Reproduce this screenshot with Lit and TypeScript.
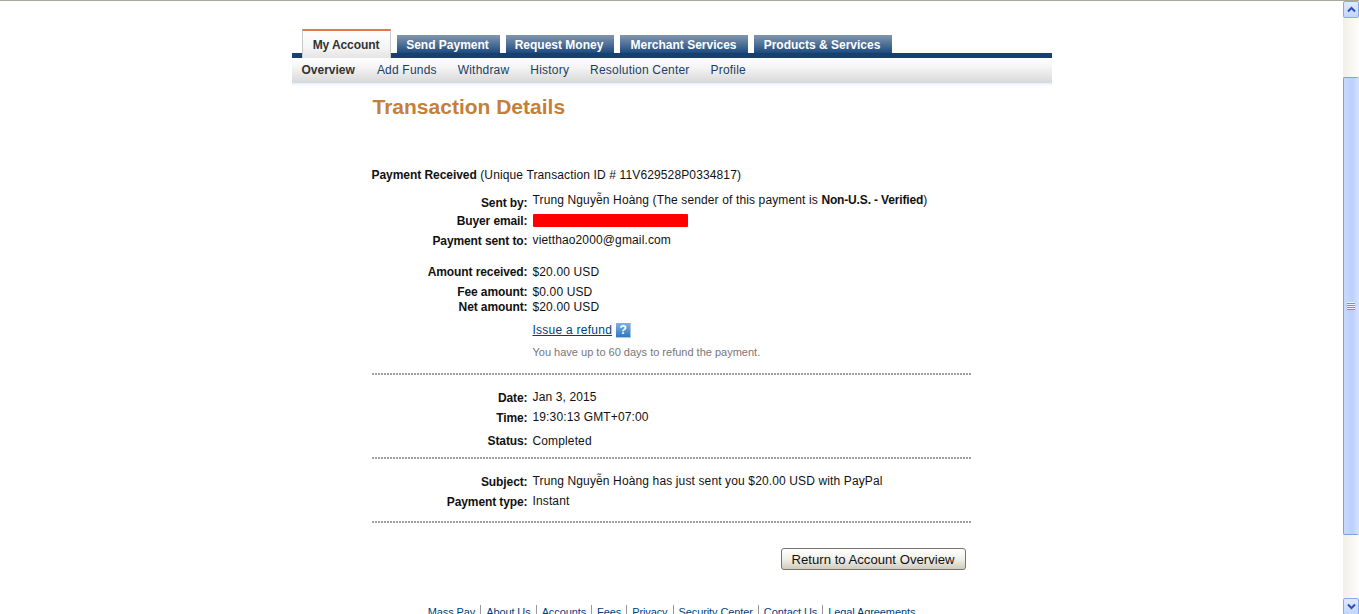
import { LitElement, html, css } from "lit";
import { customElement } from "lit/decorators.js";

const TABS = ["Send Payment", "Request Money", "Merchant Services", "Products & Services"];
const SUB = ["Add Funds", "Withdraw", "History", "Resolution Center", "Profile"];
const FOOT = ["Mass Pay", "About Us", "Accounts", "Fees", "Privacy", "Security Center", "Contact Us", "Legal Agreements"];

@customElement("app-root")
export class AppRoot extends LitElement {
  static styles = css`
    :host { display: block; font-family: "Liberation Sans", Arial, sans-serif; font-size: 12px; color: #111; }
    * { box-sizing: border-box; }
    .page { height: 614px; overflow: hidden; display: flex; border-top: 1px solid #aca899; background: #fff; }
    .main { flex: 1; min-width: 0; overflow: hidden; }
    .wrap { width: 760px; margin: 0 auto; }

    .tabs { display: flex; align-items: flex-end; gap: 6px; height: 52px; padding: 28px 0 0 10px; }
    .tab { height: 18px; text-align: center; line-height: 21px; font-weight: bold; color: #fff;
      background: linear-gradient(#8296ad, #5f7d9f 35%, #1d4a7e); white-space: nowrap; }
    .tab:nth-child(2) { width: 103px; padding-right: 1px; }
    .tab:nth-child(3) { width: 108px; padding-right: 1px; }
    .tab:nth-child(4) { width: 128px; }
    .tab:nth-child(5) { width: 138px; padding-right: 1px; }
    .tab.active { height: 29px; margin-bottom: -5px; position: relative; z-index: 1; width: 89px; letter-spacing: -0.1px;
      background: linear-gradient(#fff, #f5f5f5 60%, #e4e4e4); color: #333; border: 1px solid #c9c9c9; border-bottom: 0;
      border-top: 2px solid #e2764a; line-height: 29px; }
    .bar { height: 5px; background: #173f70; }
    .sub { height: 25px; display: flex; align-items: center; padding: 0 0 0 10px; gap: 21px; color: #1c3d64;
      letter-spacing: 0.2px; background: linear-gradient(#fff, #f4f4f4 40%, #d9d9d9); border-bottom: 1px solid #cfdbe9; }
    .sub b { color: #333; letter-spacing: 0; margin-right: 1px; }
    .shade { height: 3px; background: linear-gradient(#e6edf6, #fff); }

    .content { width: 600px; margin-left: 80px; }
    h1 { margin: 0; padding: 7px 0 0 1px; height: 79px; font-size: 21px; line-height: 28px; font-weight: bold; color: #c47f3a; }
    .head { height: 20px; line-height: 20px; letter-spacing: 0.13px; }
    .head b { letter-spacing: -0.05px; }
    .row { display: grid; grid-template-columns: 156px 1fr; column-gap: 5px; height: 20px; line-height: 20px; }
    .lab { text-align: right; font-weight: bold; letter-spacing: -0.1px; }
    .val { letter-spacing: 0.13px; }
    .val b { letter-spacing: -0.15px; }
    .up .val { margin-top: -1px; }
    .redact { display: block; width: 155px; height: 13px; margin-top: 3px; background: #f00; border-radius: 1px; }
    .first { margin-top: 6px; }
    .first .lab { padding-top: 2px; }
    .first .val { margin-top: -1px; }
    .gap { margin-top: 11px; }
    .fee { height: 17px; }
    .net { height: 16px; line-height: 16px; }
    .date { margin-top: 13px; }
    .status { margin-top: 3px; }
    .refund { margin: 6px 0 0 161px; height: 18px; display: flex; align-items: center; gap: 4px; letter-spacing: 0.25px; }
    .refund a { color: #003f7d; text-decoration: underline; }
    .q { width: 15px; height: 15px; background: linear-gradient(#7fb4e4, #2f78c0); color: #fff; font-weight: bold; font-size: 12px;
      line-height: 15px; text-align: center; letter-spacing: 0; border-right: 1px solid #a9c6e2; border-bottom: 1px solid #a9c6e2; }
    .note { margin: 5px 0 0 161px; height: 16px; line-height: 16px; font-size: 11px; color: #777; }
    .dots { height: 2px; margin-top: 13px; background: repeating-linear-gradient(90deg, #a0a0a0 0 2px, transparent 2px 3px); }
    .dots.d2 { margin-top: 6px; }
    .dots.d3 { margin-top: 9px; }
    .actions { display: flex; justify-content: flex-end; padding: 25px 6px 0 0; }
    button { width: 185px; height: 22px; padding: 0; font: 13.15px "Liberation Sans", Arial, sans-serif; color: #111; border: 1px solid #76736a; border-radius: 3px;
      background: linear-gradient(#fff, #f1efe9 50%, #cfcbbe); }
    .foot { display: flex; justify-content: center; margin-top: 35px; font-size: 11px; line-height: 14px; color: #003f7d; }
    .foot span { padding: 0 5px; border-left: 1px solid #999; letter-spacing: -0.1px; }
    .foot span:first-child { border-left: 0; }

    .sb { width: 16px; flex: none; display: flex; flex-direction: column; background: linear-gradient(90deg, #f1efe8, #fdfdfa); }
    .arrow { height: 17px; flex: none; display: flex; align-items: center; justify-content: center;
      border: 1px solid #8aa8ec; border-radius: 2px; background: linear-gradient(#e1eafe, #c3d5fd); }
    .thumb { height: 458px; margin: 59px 0 63px; flex: none; display: flex; align-items: center; justify-content: center;
      border: 1px solid #7c9fe6; border-right-color: #d3e0fd; border-radius: 2px; background: linear-gradient(90deg, #c9d8fc, #bcd0fb 60%, #d3e0fd); }
    .grip { width: 8px; height: 8px; background: repeating-linear-gradient(#eef3fe 0 1px, #6f8fd6 1px 2px); }
    svg { display: block; }
  `;

  render() {
    return html`
      <div class="page">
        <div class="main">
          <div class="wrap">
            <nav class="tabs">
              <div class="tab active">My Account</div>
              ${TABS.map((t) => html`<div class="tab">${t}</div>`)}
            </nav>
            <div class="bar"></div>
            <div class="sub"><b>Overview</b>${SUB.map((s) => html`<span>${s}</span>`)}</div>
            <div class="shade"></div>
            <div class="content">
              <h1>Transaction Details</h1>
              <div class="head"><b>Payment Received</b> (Unique Transaction ID # 11V629528P0334817)</div>
              <div class="row first"><div class="lab">Sent by:</div><div class="val">Trung Nguyễn Hoàng (The sender of this payment is <b>Non-U.S. - Verified</b>)</div></div>
              <div class="row"><div class="lab">Buyer email:</div><div><span class="redact"></span></div></div>
              <div class="row up"><div class="lab">Payment sent to:</div><div class="val">vietthao2000@gmail.com</div></div>
              <div class="row gap"><div class="lab">Amount received:</div><div class="val">$20.00 USD</div></div>
              <div class="row fee"><div class="lab">Fee amount:</div><div class="val">$0.00 USD</div></div>
              <div class="row net"><div class="lab">Net amount:</div><div class="val">$20.00 USD</div></div>
              <div class="refund"><a>Issue a refund</a><span class="q">?</span></div>
              <div class="note">You have up to 60 days to refund the payment.</div>
              <div class="dots"></div>
              <div class="row date up"><div class="lab">Date:</div><div class="val">Jan 3, 2015</div></div>
              <div class="row up"><div class="lab">Time:</div><div class="val">19:30:13 GMT+07:00</div></div>
              <div class="row status"><div class="lab">Status:</div><div class="val">Completed</div></div>
              <div class="dots d2"></div>
              <div class="row date up"><div class="lab">Subject:</div><div class="val">Trung Nguyễn Hoàng has just sent you $20.00 USD with PayPal</div></div>
              <div class="row up"><div class="lab">Payment type:</div><div class="val">Instant</div></div>
              <div class="dots d3"></div>
              <div class="actions"><button>Return to Account Overview</button></div>
            </div>
            <footer class="foot">${FOOT.map((f) => html`<span>${f}</span>`)}</footer>
          </div>
        </div>
        <aside class="sb">
          <div class="arrow"><svg width="9" height="7" viewBox="0 0 9 7"><path d="M1 5.5 4.5 2 8 5.5" fill="none" stroke="#2a50b0" stroke-width="2"/></svg></div>
          <div class="thumb"><div class="grip"></div></div>
          <div class="arrow"><svg width="9" height="7" viewBox="0 0 9 7"><path d="M1 1.5 4.5 5 8 1.5" fill="none" stroke="#2a50b0" stroke-width="2"/></svg></div>
        </aside>
      </div>
    `;
  }
}
